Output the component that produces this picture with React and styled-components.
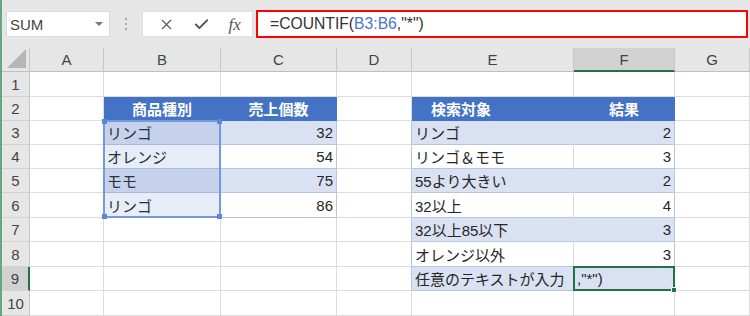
import React from "react";
import styled, { createGlobalStyle } from "styled-components";
import { X, Check } from "lucide-react";

const Global = createGlobalStyle`
  html, body { margin: 0; padding: 0; background: #ffffff; }
  body { font-family: "Liberation Sans", "Noto Sans CJK JP", sans-serif; }
  * { box-sizing: border-box; }
`;

const FONT = `"Liberation Sans", "Noto Sans CJK JP", sans-serif`;
const GRID = "#dcdcdc";
const HEAD_BLUE = "#4472c4";
const BAND = "#d9e1f2";
const TBL_LINE = "#b4c6e7";
const XL_GREEN = "#217346";

const Window = styled.div`
  width: 750px;
  height: 316px;
  overflow: hidden;
  border-left: 2px solid #6aa582;
  display: flex;
  flex-direction: column;
  background: #fff;
`;

const Toolbar = styled.div`
  height: 48px;
  flex: none;
  background: #e6e6e6;
  display: flex;
  align-items: center;
  padding: 0 2px 0 4px;
`;

const NameBox = styled.div`
  width: 104px;
  height: 26px;
  background: #fff;
  border: 1px solid #d9d9d9;
  display: flex;
  align-items: center;
  justify-content: space-between;
  padding: 0 6px 0 3px;
  font-family: ${FONT};
  font-size: 15px;
  color: #444;
`;

const DropArrow = styled.span`
  width: 0;
  height: 0;
  border-left: 4px solid transparent;
  border-right: 4px solid transparent;
  border-top: 4px solid #777;
`;

const Separator = styled.div`
  width: 32px;
  display: flex;
  justify-content: center;
  align-items: center;
`;

const FuncBox = styled.div`
  width: 111px;
  height: 26px;
  background: #fff;
  border: 1px solid #dedede;
  display: flex;
  align-items: center;
  justify-content: space-around;
  padding: 0 2px 0 6px;
  color: #555;
`;

const FxText = styled.span`
  font-family: "Liberation Serif", serif;
  font-style: italic;
  font-size: 17px;
  color: #555;
  line-height: 1;
`;

const FormulaBox = styled.div`
  flex: 1;
  margin-left: 3px;
  height: 28px;
  background: #fff;
  border: 2px solid #ff0000;
  display: flex;
  align-items: center;
  padding-left: 12px;
  font-family: ${FONT};
  font-size: 15.7px;
  color: #333;
  white-space: pre;
`;

const Ref = styled.span`
  color: #4a78c8;
`;

const Sheet = styled.div`
  display: grid;
  grid-template-columns: 28px 74px 117px 116px 75px 162px 101px 75px;
  grid-template-rows: 24px 25px 24px 24px 24px 24px 25px 24px 25px 24px 25px;
`;

const Corner = styled.div`
  background: #e6e6e6;
  border-right: 1px solid #c6c6c6;
  border-bottom: 1px solid #bfbfbf;
  display: flex;
  align-items: flex-end;
  justify-content: flex-end;
  padding: 0 3px 3px 0;
`;

const CornerTri = styled.span`
  width: 0;
  height: 0;
  border-left: 19px solid transparent;
  border-bottom: 19px solid #b6b6b6;
`;

const ColHead = styled.div`
  background: ${(p) => (p.$active ? "#d2d2d2" : "#e6e6e6")};
  border-right: 1px solid #c8c8c8;
  border-bottom: ${(p) => (p.$active ? `2px solid ${XL_GREEN}` : "1px solid #bfbfbf")};
  display: flex;
  align-items: center;
  justify-content: center;
  font-family: ${FONT};
  font-size: 15px;
  color: #444;
`;

const RowHead = styled.div`
  grid-column: 1;
  grid-row: ${(p) => p.$row};
  background: ${(p) => (p.$active ? "#d2d2d2" : "#e6e6e6")};
  border-right: ${(p) => (p.$active ? `2px solid ${XL_GREEN}` : "1px solid #c6c6c6")};
  border-bottom: 1px solid #d2d2d2;
  display: flex;
  align-items: center;
  justify-content: center;
  font-family: ${FONT};
  font-size: 15px;
  color: #444;
`;

const Cell = styled.div`
  grid-row: ${(p) => p.$row};
  grid-column: ${(p) => p.$col};
  background: ${(p) => p.$fill || "#fff"};
  border-right: 1px solid ${(p) => p.$br};
  border-bottom: 1px solid ${(p) => p.$bb};
  display: flex;
  align-items: center;
  justify-content: ${(p) =>
    p.$align === "right" ? "flex-end" : p.$align === "center" ? "center" : "flex-start"};
  padding: 0 3px 0 ${(p) => p.$pl || 3}px;
  font-family: ${FONT};
  font-size: 15px;
  font-weight: ${(p) => (p.$bold ? 700 : 400)};
  color: ${(p) => (p.$head ? "#fff" : "#262626")};
  white-space: nowrap;
  overflow: hidden;
`;

const RangeHighlight = styled.div`
  grid-row: 4 / 8;
  grid-column: 3;
  margin: -1px 0 0 -1px;
  border: 2px solid #7499dc;
  background: rgba(68, 114, 196, 0.13);
  position: relative;
  pointer-events: none;
  z-index: 2;
`;

const Handle = styled.span`
  position: absolute;
  width: 5px;
  height: 5px;
  background: ${(p) => p.$color};
  ${(p) => (p.$top ? "top: -3px;" : "bottom: -3px;")}
  ${(p) => (p.$left ? "left: -3px;" : "right: -3px;")}
`;

const ActiveCell = styled.div`
  grid-row: 10;
  grid-column: 7;
  margin: -1px 0 0 -1px;
  border: 2px solid ${XL_GREEN};
  position: relative;
  pointer-events: none;
  z-index: 3;
`;

const FillHandle = styled.span`
  position: absolute;
  right: -4px;
  bottom: -4px;
  width: 6px;
  height: 6px;
  background: ${XL_GREEN};
  border: 1px solid #fff;
`;

const COLS = ["A", "B", "C", "D", "E", "F", "G"];
const ROWS = [1, 2, 3, 4, 5, 6, 7, 8, 9, 10];

const TABLES = [
  { r0: 2, r1: 6, c0: 1, c1: 2 },
  { r0: 2, r1: 9, c0: 4, c1: 5 },
];

const VALUES = {
  "2-1": { v: "商品種別", align: "center" },
  "2-2": { v: "売上個数", align: "center" },
  "2-4": { v: "検索対象", align: "left", pl: 19 },
  "2-5": { v: "結果", align: "center" },
  "3-1": { v: "リンゴ" },
  "3-2": { v: "32", align: "right" },
  "4-1": { v: "オレンジ" },
  "4-2": { v: "54", align: "right" },
  "5-1": { v: "モモ" },
  "5-2": { v: "75", align: "right" },
  "6-1": { v: "リンゴ" },
  "6-2": { v: "86", align: "right" },
  "3-4": { v: "リンゴ" },
  "3-5": { v: "2", align: "right" },
  "4-4": { v: "リンゴ＆モモ" },
  "4-5": { v: "3", align: "right" },
  "5-4": { v: "55より大きい" },
  "5-5": { v: "2", align: "right" },
  "6-4": { v: "32以上" },
  "6-5": { v: "4", align: "right" },
  "7-4": { v: "32以上85以下" },
  "7-5": { v: "3", align: "right" },
  "8-4": { v: "オレンジ以外" },
  "8-5": { v: "3", align: "right" },
  "9-4": { v: "任意のテキストが入力" },
  "9-5": { v: ',"*")', align: "left", pl: 3 },
};

function tableAt(r, c) {
  return TABLES.find((t) => r >= t.r0 && r <= t.r1 && c >= t.c0 && c <= t.c1);
}

function cellStyle(r, c) {
  const t = tableAt(r, c);
  if (t) {
    if (r === t.r0) {
      return { fill: HEAD_BLUE, br: HEAD_BLUE, bb: HEAD_BLUE, head: true };
    }
    const band = (r - t.r0) % 2 === 1;
    const fill = band ? BAND : null;
    const br = c === t.c1 ? TBL_LINE : band ? BAND : GRID;
    return { fill, br, bb: TBL_LINE, head: false };
  }
  const next = tableAt(r, c + 1);
  const br = next && r > next.r0 && next.c0 === c + 1 ? TBL_LINE : GRID;
  return { fill: null, br, bb: GRID, head: false };
}

function Dots() {
  return (
    <svg width="4" height="14" viewBox="0 0 4 14">
      <circle cx="2" cy="2" r="1.2" fill="#a8a8a8" />
      <circle cx="2" cy="7" r="1.2" fill="#a8a8a8" />
      <circle cx="2" cy="12" r="1.2" fill="#a8a8a8" />
    </svg>
  );
}

export default function App() {
  return (
    <>
      <Global />
      <Window>
        <Toolbar>
          <NameBox>
            <span>SUM</span>
            <DropArrow />
          </NameBox>
          <Separator>
            <Dots />
          </Separator>
          <FuncBox>
            <X size={17} strokeWidth={1.6} color="#555" />
            <Check size={17} strokeWidth={2.6} color="#555" />
            <FxText>fx</FxText>
          </FuncBox>
          <FormulaBox>
            =COUNTIF(<Ref>B3:B6</Ref>,"*")
          </FormulaBox>
        </Toolbar>
        <Sheet>
          <Corner>
            <CornerTri />
          </Corner>
          {COLS.map((c) => (
            <ColHead key={c} $active={c === "F"}>
              {c}
            </ColHead>
          ))}
          {ROWS.map((r) => (
            <React.Fragment key={r}>
              <RowHead $row={r + 1} $active={r === 9}>
                {r}
              </RowHead>
              {COLS.map((_, ci) => {
                const s = cellStyle(r, ci);
                const val = VALUES[`${r}-${ci}`];
                return (
                  <Cell
                    key={ci}
                    $row={r + 1}
                    $col={ci + 2}
                    $fill={s.fill}
                    $br={s.br}
                    $bb={s.bb}
                    $head={s.head}
                    $bold={s.head}
                    $align={val ? val.align : "left"}
                    $pl={val ? val.pl : undefined}
                  >
                    {val ? val.v : ""}
                  </Cell>
                );
              })}
            </React.Fragment>
          ))}
          <RangeHighlight>
            <Handle $color="#5b87d6" $top $left />
            <Handle $color="#5b87d6" $top />
            <Handle $color="#5b87d6" $left />
            <Handle $color="#5b87d6" />
          </RangeHighlight>
          <ActiveCell>
            <FillHandle />
          </ActiveCell>
        </Sheet>
      </Window>
    </>
  );
}
